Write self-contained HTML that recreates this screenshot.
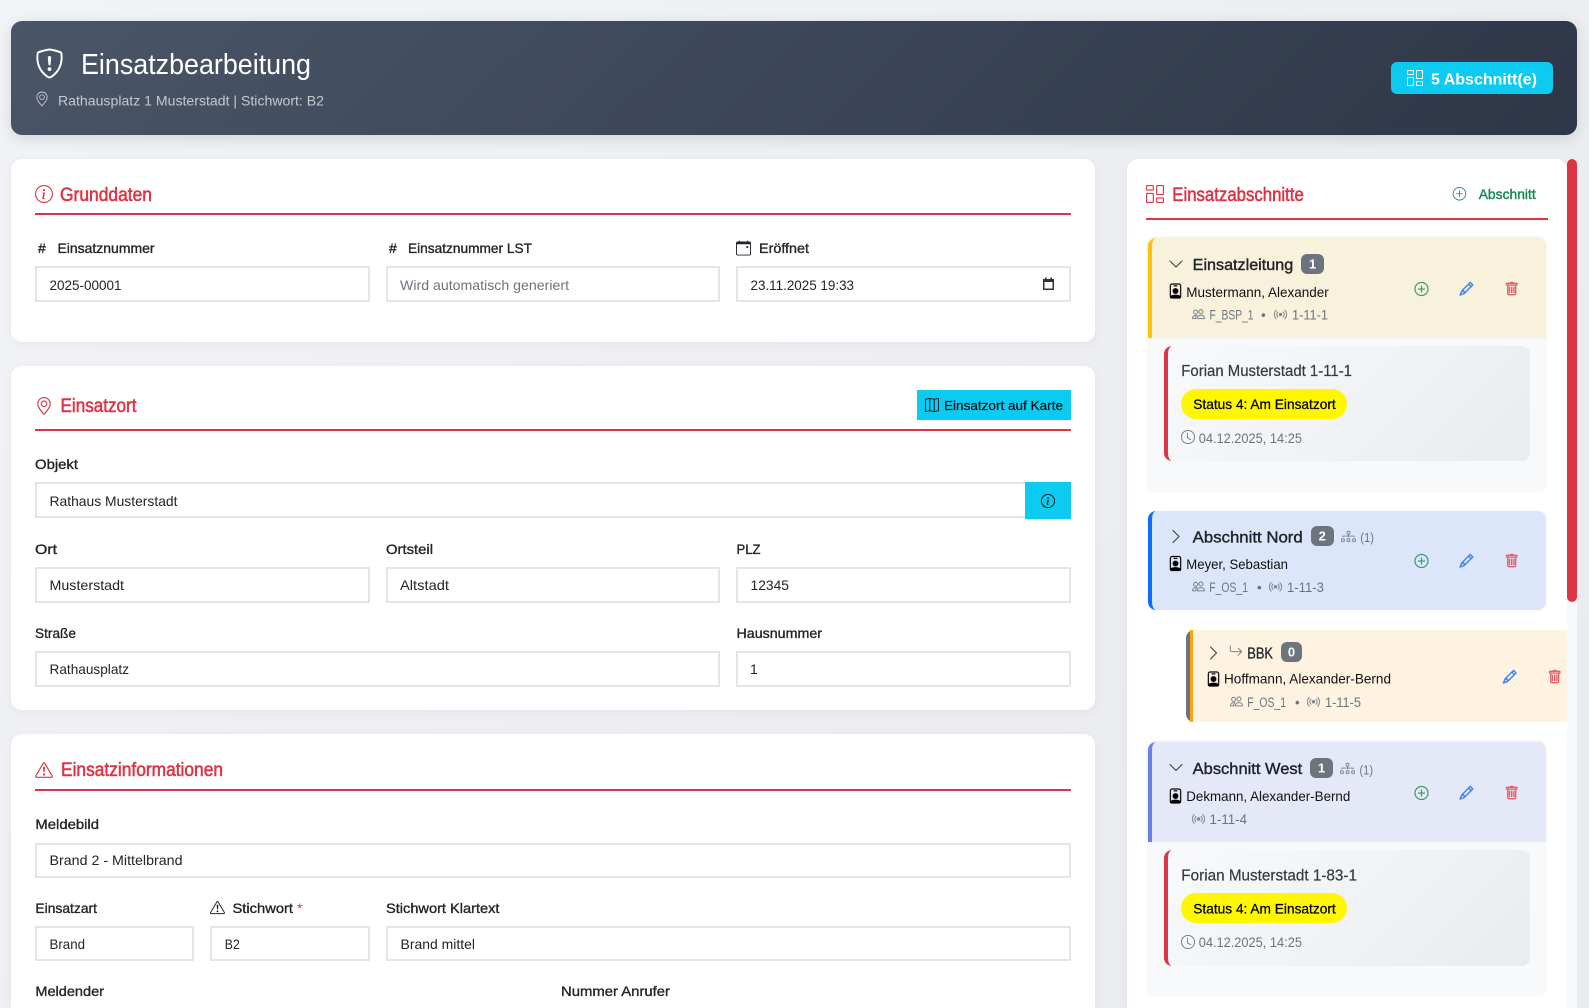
<!DOCTYPE html>
<html lang="de"><head><meta charset="utf-8"><title>Einsatzbearbeitung</title>
<style>
html,body{margin:0;padding:0;width:1589px;height:1008px;overflow:hidden}
body{position:relative;font-family:"Liberation Sans",sans-serif}
div{position:absolute;box-sizing:border-box}
#root{left:0;top:0;width:1589px;height:1008px;overflow:hidden;background:linear-gradient(135deg,#f1f3f6 0%,#e8eaee 100%)}
.card{background:#fff;border-radius:11px;box-shadow:0 2px 10px rgba(0,0,0,.05)}
.hr{background:#dc3545;height:2px}
.in{background:#fff;border:2px solid #e4e5e6;height:36px}
svg.o{position:absolute;left:0;top:0;width:1589px;height:1008px}
text{fill:currentColor;font-family:"Liberation Sans",sans-serif;font-size:14px;color:#212529}
.l{stroke:currentColor;stroke-width:.35;color:#212529}
.r{color:#dc3545;font-size:19px;stroke:currentColor;stroke-width:.55}
.s{font-size:13.5px;color:#6c757d}
.h{font-size:16px;stroke:currentColor;stroke-width:.4;color:#212529}
.b{font-size:13px;font-weight:700;color:#fff;text-anchor:middle}
.p{font-size:14px;color:#000;stroke:currentColor;stroke-width:.25}
.u{font-size:15.5px;color:#343a40;stroke:currentColor;stroke-width:.2}
.c{color:#6c757d}
.bd{background:#6c757d;border-radius:6px;height:20px}
.unit{background:linear-gradient(135deg,#f8f9fa,#e9ecef);border-left:4px solid #dc3545;border-radius:8px}
.pill{background:#fff700;border-radius:15px;height:30px}
.wrap{background:#f8f9fa;border-radius:9px}
.gh{border-radius:8px;box-shadow:0 0 3px rgba(0,0,0,.04)}
.a1{stroke:#2f9a6a;stroke-width:.35}
.a2{stroke:#3f86f8;stroke-width:.7}
.a3{stroke:#e4606d;stroke-width:.6}
.g1{stroke:#7d848b;stroke-width:.25}
.bk{stroke:#000;stroke-width:.25}
</style></head><body>
<div id="root">

<div style="left:11px;top:21px;width:1566px;height:114px;border-radius:11px;background:linear-gradient(135deg,#4a5568,#2d3748);box-shadow:0 4px 15px rgba(0,0,0,.12)"></div>
<div style="left:1391px;top:62px;width:162px;height:32px;border-radius:6px;background:#0dcaf0"></div>

<div class="card" style="left:11px;top:159px;width:1084px;height:183px"></div>
<div class="hr" style="left:35px;top:213px;width:1036px"></div>
<div class="in" style="left:35px;top:266px;width:335px"></div>
<div class="in" style="left:386px;top:266px;width:334px"></div>
<div class="in" style="left:736px;top:266px;width:335px"></div>

<div class="card" style="left:11px;top:366px;width:1084px;height:344px"></div>
<div class="hr" style="left:35px;top:429px;width:1036px"></div>
<div style="left:917px;top:390px;width:154px;height:30px;background:#0dcaf0"></div>
<div class="in" style="left:35px;top:482px;width:990px;height:36px;border-right:0"></div>
<div style="left:1025px;top:482px;width:46px;height:37px;background:#0dcaf0"></div>
<div class="in" style="left:35px;top:567px;width:335px"></div>
<div class="in" style="left:386px;top:567px;width:334px"></div>
<div class="in" style="left:736px;top:567px;width:335px"></div>
<div class="in" style="left:35px;top:651px;width:685px"></div>
<div class="in" style="left:736px;top:651px;width:335px"></div>

<div class="card" style="left:11px;top:734px;width:1084px;height:274px;border-radius:11px 11px 0 0"></div>
<div class="hr" style="left:35px;top:789px;width:1036px"></div>
<div class="in" style="left:35px;top:843px;width:1036px;height:35px"></div>
<div class="in" style="left:35px;top:926px;width:159px;height:35px"></div>
<div class="in" style="left:210px;top:926px;width:160px;height:35px"></div>
<div class="in" style="left:386px;top:926px;width:685px;height:35px"></div>

<div class="card" style="left:1127px;top:159px;width:440px;height:849px;border-radius:11px 11px 0 0"></div>
<div style="left:1567px;top:159px;width:10px;height:849px;background:#f8f9fa"></div>
<div style="left:1567px;top:159px;width:10px;height:443px;background:#dc3545;border-radius:5px"></div>
<div class="hr" style="left:1146px;top:218px;width:402px"></div>

<div class="wrap" style="left:1146px;top:236px;width:401px;height:257px"></div>
<div class="gh" style="left:1148px;top:238px;width:398px;height:100px;background:#f8f1db;border-left:4px solid #ffc107;border-radius:8px 8px 0 0"></div>
<div class="unit" style="left:1164px;top:346px;width:366px;height:115px"></div>
<div class="pill" style="left:1181px;top:389px;width:166px"></div>
<div class="bd" style="left:1301px;top:254px;width:23px"></div>

<div class="gh" style="left:1148px;top:511px;width:398px;height:99px;background:#dbe6fa;border-left:4px solid #0d6efd"></div>
<div class="bd" style="left:1311px;top:526px;width:23px"></div>

<div style="left:1186px;top:630px;width:381px;height:92px;background:#fef2e0;border-left:4px solid #6c757d;border-radius:8px 0 0 8px"></div>
<div style="left:1190px;top:630px;width:3px;height:92px;background:#ffa50f"></div>
<div class="bd" style="left:1281px;top:642px;width:21px"></div>

<div class="wrap" style="left:1146px;top:740px;width:401px;height:257px"></div>
<div class="gh" style="left:1148px;top:742px;width:398px;height:100px;background:#e5e8f7;border-left:4px solid #6b7fe8;border-radius:8px 8px 0 0"></div>
<div class="unit" style="left:1164px;top:850px;width:366px;height:116px"></div>
<div class="pill" style="left:1181px;top:893px;width:166px"></div>
<div class="bd" style="left:1310px;top:758px;width:23px"></div>

<svg class="o" viewBox="0 0 1589 1008" xmlns="http://www.w3.org/2000/svg">
<defs>
<symbol id="shield" viewBox="0 0 16 16"><path d="M5.338 1.59a61 61 0 0 0-2.837.856.48.48 0 0 0-.328.39c-.554 4.157.726 7.19 2.253 9.188a10.7 10.7 0 0 0 2.287 2.233c.346.244.652.42.893.533q.18.085.293.118a1 1 0 0 0 .101.025 1 1 0 0 0 .1-.025q.114-.034.294-.118c.24-.113.547-.29.893-.533a10.7 10.7 0 0 0 2.287-2.233c1.527-1.997 2.807-5.031 2.253-9.188a.48.48 0 0 0-.328-.39c-.651-.213-1.75-.56-2.837-.855C9.552 1.29 8.531 1.067 8 1.067c-.53 0-1.552.223-2.662.524zM5.072.56C6.157.265 7.31 0 8 0s1.843.265 2.928.56c1.11.3 2.229.655 2.887.87a1.54 1.54 0 0 1 1.044 1.262c.596 4.477-.787 7.795-2.465 9.99a11.8 11.8 0 0 1-2.517 2.453 7 7 0 0 1-1.048.625c-.28.132-.581.24-.829.24s-.548-.108-.829-.24a7 7 0 0 1-1.048-.625 11.8 11.8 0 0 1-2.517-2.453C1.928 10.487.545 7.169 1.141 2.692A1.54 1.54 0 0 1 2.185 1.43 63 63 0 0 1 5.072.56"/><path d="M7.001 11a1 1 0 1 1 2 0 1 1 0 0 1-2 0M7.1 4.995a.905.905 0 1 1 1.8 0l-.35 3.507a.553.553 0 0 1-1.1 0z"/></symbol>
<symbol id="geo" viewBox="0 0 16 16"><path d="M12.166 8.94c-.524 1.062-1.234 2.12-1.96 3.07A32 32 0 0 1 8 14.58a32 32 0 0 1-2.206-2.57c-.726-.95-1.436-2.008-1.96-3.07C3.304 7.867 3 6.862 3 6a5 5 0 0 1 10 0c0 .862-.305 1.867-.834 2.94M8 16s6-5.686 6-10A6 6 0 0 0 2 6c0 4.314 6 10 6 10"/><path d="M8 8a2 2 0 1 1 0-4 2 2 0 0 1 0 4m0 1a3 3 0 1 0 0-6 3 3 0 0 0 0 6"/></symbol>
<symbol id="info" viewBox="0 0 16 16"><path d="M8 15A7 7 0 1 1 8 1a7 7 0 0 1 0 14m0 1A8 8 0 1 0 8 0a8 8 0 0 0 0 16"/><path d="m8.93 6.588-1 4.705c-.07.34.029.533.304.533.194 0 .487-.07.686-.246l-.088.416c-.287.346-.92.598-1.465.598-.703 0-1.002-.422-.808-1.319l.738-3.468c.064-.293.006-.399-.287-.47l-.451-.081.082-.381 2.29-.287zM9 4.5a1 1 0 1 1-2 0 1 1 0 0 1 2 0"/></symbol>
<symbol id="cols" viewBox="0 0 16 16"><path d="M6 1v3H1V1zM1 0a1 1 0 0 0-1 1v3a1 1 0 0 0 1 1h5a1 1 0 0 0 1-1V1a1 1 0 0 0-1-1zm14 12v3h-5v-3zm-5-1a1 1 0 0 0-1 1v3a1 1 0 0 0 1 1h5a1 1 0 0 0 1-1v-3a1 1 0 0 0-1-1zM6 8v7H1V8zM1 7a1 1 0 0 0-1 1v7a1 1 0 0 0 1 1h5a1 1 0 0 0 1-1V8a1 1 0 0 0-1-1zm14-6v7h-5V1zm-5-1a1 1 0 0 0-1 1v7a1 1 0 0 0 1 1h5a1 1 0 0 0 1-1V1a1 1 0 0 0-1-1z"/></symbol>
<symbol id="warn" viewBox="0 0 16 16"><path d="M7.938 2.016A.13.13 0 0 1 8.002 2a.13.13 0 0 1 .063.016.15.15 0 0 1 .054.057l6.857 11.667c.036.06.035.124.002.183a.2.2 0 0 1-.054.06.1.1 0 0 1-.066.017H1.146a.1.1 0 0 1-.066-.017.2.2 0 0 1-.054-.06.18.18 0 0 1 .002-.183L7.884 2.073a.15.15 0 0 1 .054-.057m1.044-.45a1.13 1.13 0 0 0-1.96 0L.165 13.233c-.457.778.091 1.767.98 1.767h13.713c.889 0 1.438-.99.98-1.767z"/><path d="M7.002 12a1 1 0 1 1 2 0 1 1 0 0 1-2 0M7.1 5.995a.905.905 0 1 1 1.8 0l-.35 3.507a.552.552 0 0 1-1.1 0z"/></symbol>
<symbol id="plus" viewBox="0 0 16 16" overflow="visible"><path d="M8 15A7 7 0 1 1 8 1a7 7 0 0 1 0 14m0 1A8 8 0 1 0 8 0a8 8 0 0 0 0 16"/><path d="M8 4a.5.5 0 0 1 .5.5v3h3a.5.5 0 0 1 0 1h-3v3a.5.5 0 0 1-1 0v-3h-3a.5.5 0 0 1 0-1h3v-3A.5.5 0 0 1 8 4"/></symbol>
<symbol id="pen" viewBox="0 0 16 16" overflow="visible"><path d="M12.146.146a.5.5 0 0 1 .708 0l3 3a.5.5 0 0 1 0 .708l-10 10a.5.5 0 0 1-.168.11l-5 2a.5.5 0 0 1-.65-.65l2-5a.5.5 0 0 1 .11-.168zM11.207 2.5 13.5 4.793 14.793 3.5 12.5 1.207zm1.586 3L10.5 3.207 4 9.707V10h.5a.5.5 0 0 1 .5.5v.5h.5a.5.5 0 0 1 .5.5v.5h.293zm-9.761 5.175-.106.106-1.528 3.821 3.821-1.528.106-.106A.5.5 0 0 1 5 12.5V12h-.5a.5.5 0 0 1-.5-.5V11h-.5a.5.5 0 0 1-.468-.325"/></symbol>
<symbol id="trash" viewBox="0 0 16 16" overflow="visible"><path d="M5.5 5.5A.5.5 0 0 1 6 6v6a.5.5 0 0 1-1 0V6a.5.5 0 0 1 .5-.5m2.5 0a.5.5 0 0 1 .5.5v6a.5.5 0 0 1-1 0V6a.5.5 0 0 1 .5-.5m3 .5a.5.5 0 0 0-1 0v6a.5.5 0 0 0 1 0z"/><path d="M14.5 3a1 1 0 0 1-1 1H13v9a2 2 0 0 1-2 2H5a2 2 0 0 1-2-2V4h-.5a1 1 0 0 1-1-1V2a1 1 0 0 1 1-1H6a1 1 0 0 1 1-1h2a1 1 0 0 1 1 1h3.5a1 1 0 0 1 1 1zM4.118 4 4 4.059V13a1 1 0 0 0 1 1h6a1 1 0 0 0 1-1V4.059L11.882 4zM2.5 3h11V2h-11z"/></symbol>
<symbol id="cr" viewBox="0 0 16 16"><path d="M4.646 1.646a.5.5 0 0 1 .708 0l6 6a.5.5 0 0 1 0 .708l-6 6a.5.5 0 0 1-.708-.708L10.293 8 4.646 2.354a.5.5 0 0 1 0-.708"/></symbol>
<symbol id="cd" viewBox="0 0 16 16"><path d="M1.646 4.646a.5.5 0 0 1 .708 0L8 10.293l5.646-5.647a.5.5 0 0 1 .708.708l-6 6a.5.5 0 0 1-.708 0l-6-6a.5.5 0 0 1 0-.708"/></symbol>
<symbol id="clock" viewBox="0 0 16 16"><path d="M8 3.5a.5.5 0 0 0-1 0V9a.5.5 0 0 0 .252.434l3.5 2a.5.5 0 0 0 .496-.868L8 8.71z"/><path d="M8 16A8 8 0 1 0 8 0a8 8 0 0 0 0 16m7-8A7 7 0 1 1 1 8a7 7 0 0 1 14 0"/></symbol>
<symbol id="ppl" viewBox="0 0 16 16" overflow="visible"><path d="M15 14s1 0 1-1-1-4-5-4-5 3-5 4 1 1 1 1zm-7.978-1L7 12.996c.001-.264.167-1.03.76-1.72C8.312 10.629 9.282 10 11 10c1.717 0 2.687.63 3.24 1.276.593.69.758 1.457.76 1.72l-.008.002-.014.002zM11 7a2 2 0 1 0 0-4 2 2 0 0 0 0 4m3-2a3 3 0 1 1-6 0 3 3 0 0 1 6 0M6.936 9.28a6 6 0 0 0-1.23-.247A7 7 0 0 0 5 9c-4 0-5 3-5 4q0 1 1 1h4.216A2.24 2.24 0 0 1 5 13c0-1.01.377-2.042 1.09-2.904.243-.294.526-.569.846-.816M4.92 10A5.5 5.5 0 0 0 4 13H1c0-.26.164-1.03.76-1.724.545-.636 1.492-1.256 3.16-1.275ZM1.5 5.5a3 3 0 1 1 6 0 3 3 0 0 1-6 0m3-2a2 2 0 1 0 0 4 2 2 0 0 0 0-4"/></symbol>
<symbol id="radio" viewBox="0 0 16 16" overflow="visible"><path d="M3.05 3.05a7 7 0 0 0 0 9.9.5.5 0 0 1-.707.707 8 8 0 0 1 0-11.314.5.5 0 0 1 .707.707m2.122 2.122a4 4 0 0 0 0 5.656.5.5 0 1 1-.708.708 5 5 0 0 1 0-7.072.5.5 0 0 1 .708.708m5.656-.708a.5.5 0 0 1 .708 0 5 5 0 0 1 0 7.072.5.5 0 1 1-.708-.708 4 4 0 0 0 0-5.656.5.5 0 0 1 0-.708m2.122-2.12a.5.5 0 0 1 .707 0 8 8 0 0 1 0 11.313.5.5 0 0 1-.707-.707 7 7 0 0 0 0-9.9.5.5 0 0 1 0-.707zM10 8a2 2 0 1 1-4 0 2 2 0 0 1 4 0"/></symbol>
<symbol id="badge" viewBox="0 0 16 16" overflow="visible"><path d="M6.5 2a.5.5 0 0 0 0 1h3a.5.5 0 0 0 0-1zM11 8a3 3 0 1 1-6 0 3 3 0 0 1 6 0"/><path d="M4.5 0A2.5 2.5 0 0 0 2 2.5V14a2 2 0 0 0 2 2h8a2 2 0 0 0 2-2V2.5A2.5 2.5 0 0 0 11.5 0zM3 2.5A1.5 1.5 0 0 1 4.5 1h7A1.5 1.5 0 0 1 13 2.5v10.795a4.2 4.2 0 0 0-.776-.492C11.392 12.387 10.063 12 8 12s-3.392.387-4.224.803a4.2 4.2 0 0 0-.776.492z"/></symbol>
<symbol id="tree" viewBox="0 0 16 16"><path d="M6 3.5A1.5 1.5 0 0 1 7.5 2h1A1.5 1.5 0 0 1 10 3.5v1A1.5 1.5 0 0 1 8.5 6v1H14a.5.5 0 0 1 .5.5v1a.5.5 0 0 1-1 0V8h-5v.5a.5.5 0 0 1-1 0V8h-5v.5a.5.5 0 0 1-1 0v-1A.5.5 0 0 1 2 7h5.5V6A1.5 1.5 0 0 1 6 4.5zM8.5 5a.5.5 0 0 0 .5-.5v-1a.5.5 0 0 0-.5-.5h-1a.5.5 0 0 0-.5.5v1a.5.5 0 0 0 .5.5zM0 11.5A1.5 1.5 0 0 1 1.5 10h1A1.5 1.5 0 0 1 4 11.5v1A1.5 1.5 0 0 1 2.5 14h-1A1.5 1.5 0 0 1 0 12.5zm1.5-.5a.5.5 0 0 0-.5.5v1a.5.5 0 0 0 .5.5h1a.5.5 0 0 0 .5-.5v-1a.5.5 0 0 0-.5-.5zm4.5.5A1.5 1.5 0 0 1 7.5 10h1a1.5 1.5 0 0 1 1.5 1.5v1A1.5 1.5 0 0 1 8.5 14h-1A1.5 1.5 0 0 1 6 12.5zm1.5-.5a.5.5 0 0 0-.5.5v1a.5.5 0 0 0 .5.5h1a.5.5 0 0 0 .5-.5v-1a.5.5 0 0 0-.5-.5zm4.5.5a1.5 1.5 0 0 1 1.5-1.5h1a1.5 1.5 0 0 1 1.5 1.5v1a1.5 1.5 0 0 1-1.5 1.5h-1a1.5 1.5 0 0 1-1.5-1.5zm1.5-.5a.5.5 0 0 0-.5.5v1a.5.5 0 0 0 .5.5h1a.5.5 0 0 0 .5-.5v-1a.5.5 0 0 0-.5-.5z"/></symbol>
<symbol id="ret" viewBox="0 0 16 16"><path d="M1.5 1.5A.5.5 0 0 0 1 2v4.8a2.5 2.5 0 0 0 2.5 2.5h9.793l-3.347 3.346a.5.5 0 0 0 .708.708l4.2-4.2a.5.5 0 0 0 0-.708l-4-4a.5.5 0 0 0-.708.708L13.293 8.3H3.5A1.5 1.5 0 0 1 2 6.8V2a.5.5 0 0 0-.5-.5"/></symbol>
<symbol id="map" viewBox="0 0 16 16"><path d="M15.817.113A.5.5 0 0 1 16 .5v14a.5.5 0 0 1-.402.49l-5 1a.5.5 0 0 1-.196 0L5.5 15.01l-4.902.98A.5.5 0 0 1 0 15.5v-14a.5.5 0 0 1 .402-.49l5-1a.5.5 0 0 1 .196 0L10.5.99l4.902-.98a.5.5 0 0 1 .415.103M10 1.91l-4-.8v12.98l4 .8zm1 12.98 4-.8V1.11l-4 .8zm-6-.8V1.11l-4 .8v12.98z"/></symbol>
<symbol id="cal" viewBox="0 0 16 16"><path d="M11 6.5a.5.5 0 0 1 .5-.5h1a.5.5 0 0 1 .5.5v1a.5.5 0 0 1-.5.5h-1a.5.5 0 0 1-.5-.5z"/><path d="M3.5 0a.5.5 0 0 1 .5.5V1h8V.5a.5.5 0 0 1 1 0V1h1a2 2 0 0 1 2 2v11a2 2 0 0 1-2 2H2a2 2 0 0 1-2-2V3a2 2 0 0 1 2-2h1V.5a.5.5 0 0 1 .5-.5M1 4v10a1 1 0 0 0 1 1h12a1 1 0 0 0 1-1V4z"/></symbol>
</defs>

<!-- header -->
<use href="#shield" x="34.5" y="48.5" width="30" height="30" fill="#fff"/>
<text x="81" y="74" textLength="230" lengthAdjust="spacingAndGlyphs" style="font-size:29px;color:#fff">Einsatzbearbeitung</text>
<use href="#geo" x="34.5" y="91.5" width="15" height="15" fill="#bfc4cc"/>
<text x="58" y="105.3" textLength="266" lengthAdjust="spacingAndGlyphs" style="color:#c4c9d0">Rathausplatz 1 Musterstadt | Stichwort: B2</text>
<use href="#cols" x="1407" y="70" width="16" height="16" fill="#fff"/>
<text x="1431" y="84.3" textLength="106" lengthAdjust="spacingAndGlyphs" style="font-size:16px;font-weight:700;color:#fff">5 Abschnitt(e)</text>

<!-- Grunddaten -->
<use href="#info" x="35" y="185" width="18" height="18" fill="#dc3545"/>
<text class="r" x="60" y="201" textLength="92" lengthAdjust="spacingAndGlyphs">Grunddaten</text>
<text class="l" x="38" y="253">#</text>
<text class="l" x="57.5" y="253" textLength="97" lengthAdjust="spacingAndGlyphs">Einsatznummer</text>
<text class="l" x="389" y="253">#</text>
<text class="l" x="408" y="253" textLength="124" lengthAdjust="spacingAndGlyphs">Einsatznummer LST</text>
<use href="#cal" x="736" y="240.5" width="15" height="15" fill="#212529"/>
<text class="l" x="759" y="253" textLength="50" lengthAdjust="spacingAndGlyphs">Eröffnet</text>
<text x="49.5" y="290" textLength="72" lengthAdjust="spacingAndGlyphs">2025-00001</text>
<text x="400" y="290" textLength="169" lengthAdjust="spacingAndGlyphs" style="color:#6c757d">Wird automatisch generiert</text>
<text x="750.5" y="290" textLength="103.5" lengthAdjust="spacingAndGlyphs">23.11.2025 19:33</text>
<g fill="#333"><rect x="1043.75" y="279.75" width="9.5" height="9.5" fill="none" stroke="#333" stroke-width="1.5"/><rect x="1043" y="279" width="11" height="3"/><rect x="1045" y="277.5" width="1.5" height="2"/><rect x="1050.5" y="277.5" width="1.5" height="2"/></g>

<!-- Einsatzort -->
<use href="#geo" x="35" y="397" width="18" height="18" fill="#dc3545"/>
<text class="r" x="60.5" y="412" textLength="76" lengthAdjust="spacingAndGlyphs">Einsatzort</text>
<use href="#map" x="925" y="398" width="14" height="14" fill="#111"/>
<text x="944" y="410" textLength="119" lengthAdjust="spacingAndGlyphs" style="font-size:13px;color:#111;stroke:#111;stroke-width:.2">Einsatzort auf Karte</text>
<text class="l" x="35" y="469" textLength="43" lengthAdjust="spacingAndGlyphs">Objekt</text>
<text x="49.5" y="506" textLength="128" lengthAdjust="spacingAndGlyphs">Rathaus Musterstadt</text>
<use href="#info" x="1041" y="494" width="14" height="14" fill="#111"/>
<text class="l" x="35" y="554" textLength="22" lengthAdjust="spacingAndGlyphs">Ort</text>
<text class="l" x="386" y="554" textLength="47" lengthAdjust="spacingAndGlyphs">Ortsteil</text>
<text class="l" x="736.5" y="554" textLength="24" lengthAdjust="spacingAndGlyphs">PLZ</text>
<text x="49.5" y="590" textLength="74.5" lengthAdjust="spacingAndGlyphs">Musterstadt</text>
<text x="400" y="590" textLength="49" lengthAdjust="spacingAndGlyphs">Altstadt</text>
<text x="750.5" y="590" textLength="38.5" lengthAdjust="spacingAndGlyphs">12345</text>
<text class="l" x="35" y="638" textLength="41" lengthAdjust="spacingAndGlyphs">Straße</text>
<text class="l" x="736.5" y="638" textLength="85.5" lengthAdjust="spacingAndGlyphs">Hausnummer</text>
<text x="49.5" y="674" textLength="79.5" lengthAdjust="spacingAndGlyphs">Rathausplatz</text>
<text x="750" y="674">1</text>

<!-- Einsatzinformationen -->
<use href="#warn" x="35" y="761" width="18" height="18" fill="#dc3545"/>
<text class="r" x="61" y="776" textLength="162" lengthAdjust="spacingAndGlyphs">Einsatzinformationen</text>
<text class="l" x="35.4" y="829" textLength="63.6" lengthAdjust="spacingAndGlyphs">Meldebild</text>
<text x="49.5" y="865" textLength="133" lengthAdjust="spacingAndGlyphs">Brand 2 - Mittelbrand</text>
<text class="l" x="35.4" y="913" textLength="61.6" lengthAdjust="spacingAndGlyphs">Einsatzart</text>
<use href="#warn" x="210" y="900" width="15" height="15" fill="#212529"/>
<text class="l" x="232.5" y="913" textLength="60.5" lengthAdjust="spacingAndGlyphs">Stichwort</text>
<text x="297" y="913" style="color:#dc3545">*</text>
<text class="l" x="386" y="913" textLength="113.5" lengthAdjust="spacingAndGlyphs">Stichwort Klartext</text>
<text x="49.5" y="949" textLength="35.5" lengthAdjust="spacingAndGlyphs">Brand</text>
<text x="224.8" y="949" textLength="15" lengthAdjust="spacingAndGlyphs">B2</text>
<text x="400.5" y="949" textLength="74.5" lengthAdjust="spacingAndGlyphs">Brand mittel</text>
<text class="l" x="35.4" y="996" textLength="68.6" lengthAdjust="spacingAndGlyphs">Meldender</text>
<text class="l" x="561" y="996" textLength="109" lengthAdjust="spacingAndGlyphs">Nummer Anrufer</text>

<!-- Einsatzabschnitte -->
<use href="#cols" x="1146" y="185" width="18" height="18" fill="#dc3545"/>
<text class="r" x="1172.3" y="201" textLength="131.5" lengthAdjust="spacingAndGlyphs">Einsatzabschnitte</text>
<use href="#plus" x="1452.7" y="187" width="13.5" height="13.5" fill="#198754"/>
<text x="1478.7" y="199" textLength="57" lengthAdjust="spacingAndGlyphs" style="font-size:14px;color:#198754;stroke:#198754;stroke-width:.4">Abschnitt</text>

<!-- Einsatzleitung -->
<use href="#cd" x="1168" y="256" width="16" height="16" fill="#343a40"/>
<text class="h" x="1192.7" y="270" textLength="100.5" lengthAdjust="spacingAndGlyphs">Einsatzleitung</text>
<text class="b" x="1312.6" y="268.5">1</text>
<use href="#badge" class="bk" x="1168" y="283.5" width="15" height="15" fill="#000"/>
<text x="1186.3" y="296.8" textLength="142.5" lengthAdjust="spacingAndGlyphs" style="color:#111">Mustermann, Alexander</text>
<use href="#ppl" class="g1" x="1192" y="307.6" width="13" height="13" fill="#7d848b"/>
<text class="s" x="1209.5" y="319.7" textLength="44" lengthAdjust="spacingAndGlyphs">F_BSP_1</text>
<text class="s" x="1261" y="319.7">•</text>
<use href="#radio" class="g1" x="1274" y="308" width="13" height="13" fill="#7d848b"/>
<text class="s" x="1292" y="319.7" textLength="36" lengthAdjust="spacingAndGlyphs">1-11-1</text>
<use href="#plus" class="a1" x="1414.5" y="282" width="14" height="14" fill="#2f9a6a"/>
<use href="#pen" class="a2" x="1459.7" y="282" width="13.5" height="13.5" fill="#3f86f8"/>
<use href="#trash" class="a3" x="1504.7" y="282" width="14" height="14" fill="#e4606d"/>

<text class="u" x="1181.3" y="375.8" textLength="170.7" lengthAdjust="spacingAndGlyphs">Forian Musterstadt 1-11-1</text>
<text class="p" x="1193.3" y="408.8" textLength="142.4" lengthAdjust="spacingAndGlyphs">Status 4: Am Einsatzort</text>
<use href="#clock" x="1181" y="430" width="14" height="14" fill="#6c757d"/>
<text x="1198.7" y="442.8" textLength="103.3" lengthAdjust="spacingAndGlyphs" class="c">04.12.2025, 14:25</text>

<!-- Nord -->
<use href="#cr" x="1168" y="528.5" width="16" height="16" fill="#343a40"/>
<text class="h" x="1192.7" y="542.3" textLength="110" lengthAdjust="spacingAndGlyphs">Abschnitt Nord</text>
<text class="b" x="1322.3" y="540.5">2</text>
<use href="#tree" x="1341" y="529" width="15" height="15" fill="#7d848b"/>
<text x="1360.3" y="542" textLength="13.7" lengthAdjust="spacingAndGlyphs" style="font-size:13px;color:#6c757d">(1)</text>
<use href="#badge" class="bk" x="1168" y="556" width="15" height="15" fill="#000"/>
<text x="1186.3" y="568.8" textLength="101.7" lengthAdjust="spacingAndGlyphs" style="color:#111">Meyer, Sebastian</text>
<use href="#ppl" class="g1" x="1192" y="579.9" width="13" height="13" fill="#7d848b"/>
<text class="s" x="1209.3" y="591.8" textLength="38.7" lengthAdjust="spacingAndGlyphs">F_OS_1</text>
<text class="s" x="1257" y="591.8">•</text>
<use href="#radio" class="g1" x="1269" y="580.3" width="13" height="13" fill="#7d848b"/>
<text class="s" x="1287" y="591.8" textLength="37" lengthAdjust="spacingAndGlyphs">1-11-3</text>
<use href="#plus" class="a1" x="1414.5" y="554" width="14" height="14" fill="#2f9a6a"/>
<use href="#pen" class="a2" x="1459.7" y="554" width="13.5" height="13.5" fill="#3f86f8"/>
<use href="#trash" class="a3" x="1504.7" y="554" width="14" height="14" fill="#e4606d"/>

<!-- BBK -->
<use href="#cr" x="1205.5" y="645" width="16" height="16" fill="#343a40"/>
<use href="#ret" x="1229" y="644" width="14" height="14" fill="#6c757d"/>
<text x="1247.3" y="658.3" textLength="25.7" lengthAdjust="spacingAndGlyphs" style="font-size:15.5px;color:#212529;stroke:#212529;stroke-width:.25">BBK</text>
<text class="b" x="1291.5" y="656.5">0</text>
<use href="#badge" class="bk" x="1206" y="671.5" width="15" height="15" fill="#000"/>
<text x="1224" y="683.5" textLength="167" lengthAdjust="spacingAndGlyphs" style="color:#111">Hoffmann, Alexander-Bernd</text>
<use href="#ppl" class="g1" x="1230" y="694.9" width="13" height="13" fill="#7d848b"/>
<text class="s" x="1247.3" y="706.8" textLength="38.7" lengthAdjust="spacingAndGlyphs">F_OS_1</text>
<text class="s" x="1295" y="706.8">•</text>
<use href="#radio" class="g1" x="1307" y="695.3" width="13" height="13" fill="#7d848b"/>
<text class="s" x="1325" y="706.8" textLength="36" lengthAdjust="spacingAndGlyphs">1-11-5</text>
<use href="#pen" class="a2" x="1503" y="670" width="13.5" height="13.5" fill="#3f86f8"/>
<use href="#trash" class="a3" x="1547.7" y="670" width="14" height="14" fill="#e4606d"/>

<!-- West -->
<use href="#cd" x="1168" y="759.5" width="16" height="16" fill="#343a40"/>
<text class="h" x="1192.7" y="774" textLength="109.5" lengthAdjust="spacingAndGlyphs">Abschnitt West</text>
<text class="b" x="1321.5" y="772.5">1</text>
<use href="#tree" x="1340" y="761" width="15" height="15" fill="#7d848b"/>
<text x="1359.5" y="774.5" textLength="13.5" lengthAdjust="spacingAndGlyphs" style="font-size:13px;color:#6c757d">(1)</text>
<use href="#badge" class="bk" x="1168" y="788.5" width="15" height="15" fill="#000"/>
<text x="1186.3" y="801.2" textLength="164" lengthAdjust="spacingAndGlyphs" style="color:#111">Dekmann, Alexander-Bernd</text>
<use href="#radio" class="g1" x="1192" y="812.5" width="13" height="13" fill="#7d848b"/>
<text class="s" x="1209.5" y="824.2" textLength="37.5" lengthAdjust="spacingAndGlyphs">1-11-4</text>
<use href="#plus" class="a1" x="1414.5" y="786" width="14" height="14" fill="#2f9a6a"/>
<use href="#pen" class="a2" x="1459.7" y="786" width="13.5" height="13.5" fill="#3f86f8"/>
<use href="#trash" class="a3" x="1504.7" y="786" width="14" height="14" fill="#e4606d"/>

<text class="u" x="1181.3" y="880.7" textLength="175.7" lengthAdjust="spacingAndGlyphs">Forian Musterstadt 1-83-1</text>
<text class="p" x="1193.3" y="913.3" textLength="142.4" lengthAdjust="spacingAndGlyphs">Status 4: Am Einsatzort</text>
<use href="#clock" x="1181" y="935" width="14" height="14" fill="#6c757d"/>
<text x="1198.7" y="946.8" textLength="103.3" lengthAdjust="spacingAndGlyphs" class="c">04.12.2025, 14:25</text>
</svg>
</div>
</body></html>
